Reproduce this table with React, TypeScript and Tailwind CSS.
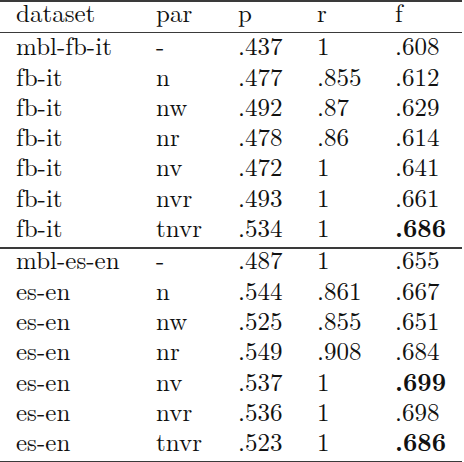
const rows1: [string, string, string, string, string, boolean][] = [
  ["mbl-fb-it", "-", ".437", "1", ".608", false],
  ["fb-it", "n", ".477", ".855", ".612", false],
  ["fb-it", "nw", ".492", ".87", ".629", false],
  ["fb-it", "nr", ".478", ".86", ".614", false],
  ["fb-it", "nv", ".472", "1", ".641", false],
  ["fb-it", "nvr", ".493", "1", ".661", false],
  ["fb-it", "tnvr", ".534", "1", ".686", true],
];

const rows2: [string, string, string, string, string, boolean][] = [
  ["mbl-es-en", "-", ".487", "1", ".655", false],
  ["es-en", "n", ".544", ".861", ".667", false],
  ["es-en", "nw", ".525", ".855", ".651", false],
  ["es-en", "nr", ".549", ".908", ".684", false],
  ["es-en", "nv", ".537", "1", ".699", true],
  ["es-en", "nvr", ".536", "1", ".698", false],
  ["es-en", "tnvr", ".523", "1", ".686", true],
];

// latex tabular look: booktabs style rules
const Row = ({ cells, bold }: { cells: string[]; bold?: boolean }) => (
  <div className="grid grid-cols-[156px_82px_79px_78px_1fr] h-[30.3px]">
    {cells.map((c, i) => (
      <div
        key={i}
        className={`font-['Latin_Modern_Roman','Liberation_Serif',serif] text-[25px] leading-[20px] text-[#111] ${
          i === 0 ? "pl-4" : ""
        } ${bold && i === 4 ? "font-bold" : ""}`}
      >
        {c}
      </div>
    ))}
  </div>
);

const App: React.FC = () => {
  return (
    <div className="w-[464px] h-[462px] bg-white">
      <div className="w-[462px] border-t-2 border-b-2 border-[#3a3a3a]">
        <Row cells={["dataset", "par", "p", "r", "f"]} />
        <div className="border-t-[1.5px] border-[#3a3a3a] pt-[2px]">
          {rows1.map((r, i) => (
            <Row key={i} cells={r.slice(0, 5) as string[]} bold={r[5]} />
          ))}
        </div>
        <div className="border-t-2 border-[#3a3a3a]">
          {rows2.map((r, i) => (
            <Row key={i} cells={r.slice(0, 5) as string[]} bold={r[5]} />
          ))}
        </div>
      </div>
    </div>
  );
};

export default App;
